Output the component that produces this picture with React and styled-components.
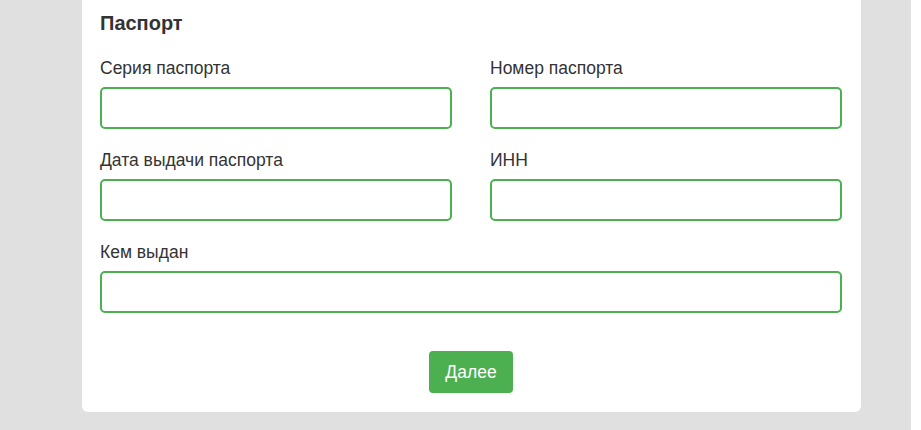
import React from 'react';
import styled, { createGlobalStyle } from 'styled-components';

const GlobalStyle = createGlobalStyle`
  html, body {
    margin: 0;
    padding: 0;
    background: #fff;
  }
  body {
    font-family: "Liberation Sans", Arial, sans-serif;
    color: #333;
  }
`;

const Page = styled.div`
  width: 911px;
  height: 430px;
  background: #e0e0e0;
  overflow: hidden;
  display: flex;
  align-items: stretch;
  padding: 0 50px 18px 82px;
  box-sizing: border-box;
`;

const Card = styled.div`
  width: 779px;
  background: #fff;
  border-radius: 0 0 6px 6px;
  padding: 9px 19px 19px 18px;
  box-sizing: border-box;
  display: flex;
  flex-direction: column;
  justify-content: flex-end;
`;

const Title = styled.h3`
  margin: 0 0 22px;
  font-size: 20px;
  line-height: 26px;
  font-weight: bold;
  color: #333;
`;

const Grid = styled.div`
  display: grid;
  grid-template-columns: 1fr 1fr;
  column-gap: 38px;
  row-gap: 21px;
`;

const Field = styled.div`
  display: flex;
  flex-direction: column;
  grid-column: ${props => (props.wide ? '1 / -1' : 'auto')};
`;

const Label = styled.label`
  font-size: 17.5px;
  line-height: 20px;
  color: #333;
  margin-bottom: 9px;
`;

const Input = styled.input`
  height: 42px;
  box-sizing: border-box;
  border: 2px solid #4caf50;
  border-radius: 5px;
  padding: 0 10px;
  font-size: 16px;
  font-family: inherit;
  outline: none;
`;

const Actions = styled.div`
  display: flex;
  justify-content: center;
  margin-top: 38px;
`;

const Button = styled.button`
  height: 42px;
  padding: 0 16px;
  background: #4caf50;
  color: #fff;
  border: none;
  border-radius: 4px;
  font-size: 17.5px;
  font-family: inherit;
  cursor: pointer;
`;

const fields = [
  { id: 'series', label: 'Серия паспорта' },
  { id: 'number', label: 'Номер паспорта' },
  { id: 'date', label: 'Дата выдачи паспорта' },
  { id: 'inn', label: 'ИНН' },
  { id: 'issued', label: 'Кем выдан', wide: true },
];

const App = () => {
  return (
    <>
      <GlobalStyle />
      <Page>
        <Card>
          <Title>Паспорт</Title>
          <Grid>
            {fields.map(f => (
              <Field key={f.id} wide={f.wide}>
                <Label htmlFor={f.id}>{f.label}</Label>
                <Input id={f.id} type="text" />
              </Field>
            ))}
          </Grid>
          <Actions>
            <Button type="button">Далее</Button>
          </Actions>
        </Card>
      </Page>
    </>
  );
};

export default App;
